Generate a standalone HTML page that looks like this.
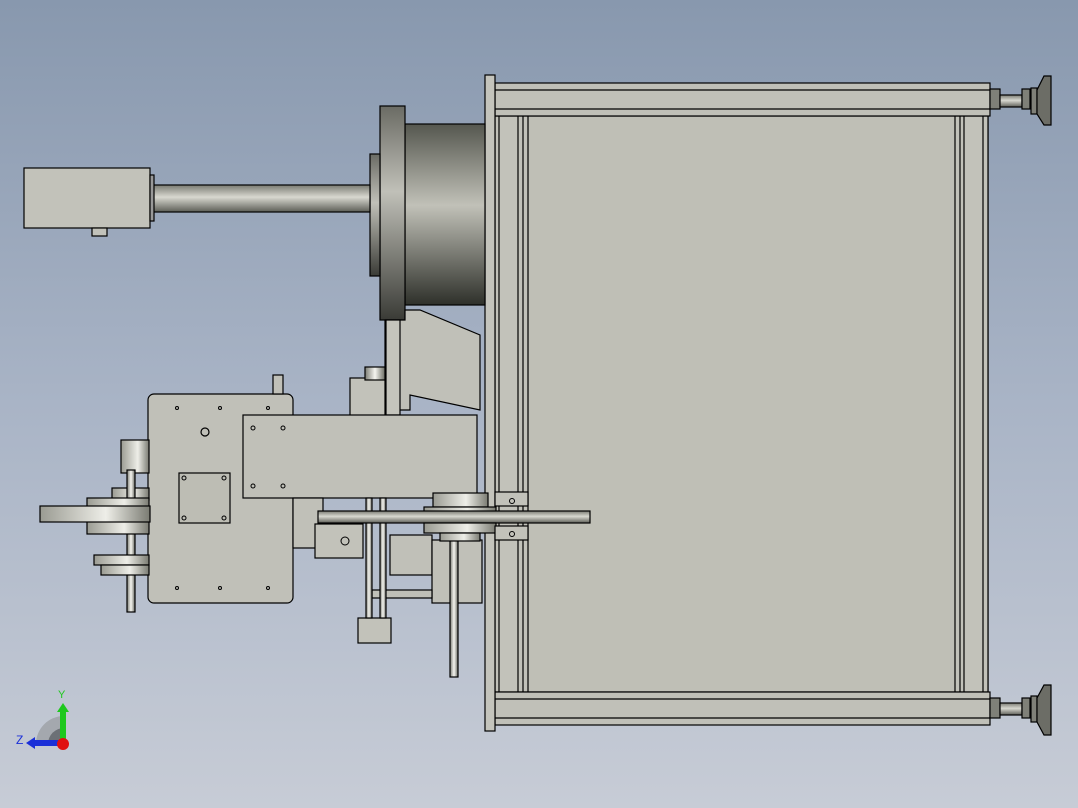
<!DOCTYPE html>
<html><head><meta charset="utf-8"><style>
html,body{margin:0;padding:0;}
body{width:1078px;height:808px;overflow:hidden;background:linear-gradient(#8898ae,#a9b4c6 50%,#c7ccd6);}
svg{position:absolute;left:0;top:0;}
</style></head><body>
<svg width="1078" height="808" viewBox="0 0 1078 808" xmlns="http://www.w3.org/2000/svg">
<defs>
<linearGradient id="cyl" x1="0" y1="0" x2="0" y2="1">
<stop offset="0" stop-color="#55574f"/><stop offset="0.45" stop-color="#c1c1b8"/><stop offset="1" stop-color="#2e302a"/></linearGradient>
<linearGradient id="fl" x1="0" y1="0" x2="0" y2="1">
<stop offset="0" stop-color="#6a6b64"/><stop offset="0.4" stop-color="#c0c0b8"/><stop offset="1" stop-color="#3a3b36"/></linearGradient>
<linearGradient id="sh" x1="0" y1="0" x2="0" y2="1">
<stop offset="0" stop-color="#7a7b73"/><stop offset="0.45" stop-color="#d8d8d0"/><stop offset="1" stop-color="#5c5d56"/></linearGradient>
<linearGradient id="hb" x1="0" y1="0" x2="1" y2="0">
<stop offset="0" stop-color="#9a9b92"/><stop offset="0.6" stop-color="#eeeee8"/><stop offset="1" stop-color="#7a7b72"/></linearGradient>
<linearGradient id="vr" x1="0" y1="0" x2="1" y2="0">
<stop offset="0" stop-color="#7a7b73"/><stop offset="0.5" stop-color="#f5f5f0"/><stop offset="1" stop-color="#6a6b63"/></linearGradient>
</defs>
<g stroke="#000" stroke-width="1.2">
<rect x="495" y="116" width="493" height="576" fill="#bfbfb6"/>
<rect x="495" y="116" width="33" height="576" fill="#c2c2ba"/>
<line x1="499" y1="116" x2="499" y2="692"/><line x1="518" y1="116" x2="518" y2="692"/><line x1="523" y1="116" x2="523" y2="692"/>
<rect x="955" y="116" width="33" height="576" fill="#c2c2ba"/>
<line x1="960" y1="116" x2="960" y2="692"/><line x1="964" y1="116" x2="964" y2="692"/><line x1="983" y1="116" x2="983" y2="692"/>
<rect x="495" y="83" width="495" height="33" fill="#c0c0b8"/>
<line x1="495" y1="90" x2="990" y2="90"/><line x1="495" y1="109" x2="990" y2="109"/>
<rect x="495" y="692" width="495" height="33" fill="#c0c0b8"/>
<line x1="495" y1="699" x2="990" y2="699"/><line x1="495" y1="718" x2="990" y2="718"/>
<rect x="485" y="75" width="10" height="656" fill="#c4c4bc"/>
<g fill="#7f8078">
<rect x="990" y="89" width="10" height="20"/><rect x="1000" y="95" width="22" height="12" fill="url(#sh)"/>
<rect x="1022" y="89" width="8" height="20"/><rect x="1031" y="88" width="6" height="26"/>
<path d="M1037 90 L1044 76 L1051 76 L1051 125 L1044 125 L1037 114Z" fill="#6c6d66"/>
<rect x="990" y="698" width="10" height="20"/><rect x="1000" y="703" width="22" height="12" fill="url(#sh)"/>
<rect x="1022" y="698" width="8" height="20"/><rect x="1031" y="696" width="6" height="26"/>
<path d="M1037 698 L1044 685 L1051 685 L1051 735 L1044 735 L1037 722Z" fill="#6c6d66"/>
</g>
<rect x="405" y="124" width="80" height="181" fill="url(#cyl)"/>
<rect x="380" y="106" width="25" height="214" fill="url(#fl)"/>
<rect x="370" y="154" width="10" height="122" fill="url(#fl)"/>
<rect x="152" y="185" width="218" height="27" fill="url(#sh)"/>
<rect x="24" y="168" width="126" height="60" fill="#c2c2ba"/>
<rect x="150" y="175" width="4" height="46" fill="#999"/>
<rect x="92" y="228" width="15" height="8" fill="#c2c2ba"/>
<path d="M385 320 L405 320 L405 310 L420 310 L480 335 L480 410 L410 395 L410 410 L385 410Z" fill="#c0c0b8"/>
<rect x="386" y="320" width="14" height="95" fill="#c4c4bc"/>
<rect x="350" y="378" width="35" height="40" fill="#c2c2ba"/>
<rect x="365" y="367" width="20" height="13" fill="url(#vr)"/>
<rect x="148" y="394" width="145" height="209" rx="6" fill="#c0c0b8"/>
<rect x="273" y="375" width="10" height="19" fill="#c0c0b8"/>
<rect x="179" y="473" width="51" height="50" fill="#bdbdb4"/>
<circle cx="205" cy="432" r="4" fill="none"/>
<rect x="121" y="440" width="28" height="33" fill="url(#hb)"/>
<rect x="112" y="488" width="37" height="12" fill="url(#hb)"/>
<rect x="127" y="470" width="8" height="142" fill="url(#vr)"/>
<rect x="87" y="498" width="62" height="36" fill="url(#hb)"/>
<rect x="40" y="506" width="110" height="16" fill="url(#hb)"/>
<rect x="94" y="555" width="55" height="10" fill="url(#hb)"/>
<rect x="101" y="565" width="48" height="10" fill="url(#hb)"/>
<rect x="243" y="415" width="234" height="83" fill="#c0c0b8"/>
<rect x="293" y="498" width="30" height="50" fill="#c0c0b8"/>
<rect x="315" y="524" width="48" height="34" fill="#c2c2ba"/>
<rect x="390" y="535" width="42" height="40" fill="#c0c0b8"/>
<rect x="432" y="540" width="50" height="63" fill="#c0c0b8"/>
<rect x="372" y="590" width="60" height="8" fill="#c0c0b8"/>
<rect x="358" y="618" width="33" height="25" fill="#c2c2ba"/>
<rect x="366" y="498" width="6" height="120" fill="url(#vr)"/>
<rect x="380" y="498" width="6" height="120" fill="url(#vr)"/>
<rect x="450" y="535" width="8" height="142" fill="url(#vr)"/>
<rect x="433" y="493" width="55" height="14" fill="url(#hb)"/>
<rect x="424" y="507" width="72" height="12" fill="url(#hb)"/>
<rect x="318" y="511" width="272" height="12" fill="url(#sh)"/>
<rect x="424" y="523" width="72" height="10" fill="url(#hb)"/>
<rect x="440" y="533" width="40" height="8" fill="url(#hb)"/>
<rect x="495" y="492" width="33" height="14" fill="#c2c2ba"/>
<rect x="495" y="526" width="33" height="14" fill="#c2c2ba"/>
</g>
<g fill="none" stroke="#000" stroke-width="1">
<circle cx="177" cy="408" r="1.5"/><circle cx="220" cy="408" r="1.5"/><circle cx="268" cy="408" r="1.5"/>
<circle cx="177" cy="588" r="1.5"/><circle cx="220" cy="588" r="1.5"/><circle cx="268" cy="588" r="1.5"/>
<circle cx="253" cy="428" r="2"/><circle cx="283" cy="428" r="2"/><circle cx="253" cy="486" r="2"/><circle cx="283" cy="486" r="2"/>
<circle cx="184" cy="478" r="2"/><circle cx="224" cy="478" r="2"/><circle cx="184" cy="518" r="2"/><circle cx="224" cy="518" r="2"/>
<circle cx="512" cy="501" r="2.5"/><circle cx="512" cy="534" r="2.5"/><circle cx="345" cy="541" r="4"/>
</g>
<path d="M36 744 A28 28 0 0 1 64 716 L64 744Z" fill="#a4a8ae"/>
<path d="M48 744 A16 16 0 0 1 64 728 L64 744Z" fill="#6c7076"/>
<rect x="60" y="710" width="6" height="32" fill="#1ec81e"/>
<path d="M57 712 L63 703 L69 712Z" fill="#1ec81e"/>
<rect x="34" y="740" width="30" height="6" fill="#1a2fd8"/>
<path d="M35 737 L26 743 L35 749Z" fill="#1a2fd8"/>
<circle cx="63" cy="744" r="6" fill="#e01010"/>
<text x="58" y="698" font-family="Liberation Sans,sans-serif" font-size="11" fill="#1ec81e">Y</text>
<text x="16" y="744" font-family="Liberation Sans,sans-serif" font-size="12" fill="#1a2fd8">Z</text>
</svg>
</body></html>
